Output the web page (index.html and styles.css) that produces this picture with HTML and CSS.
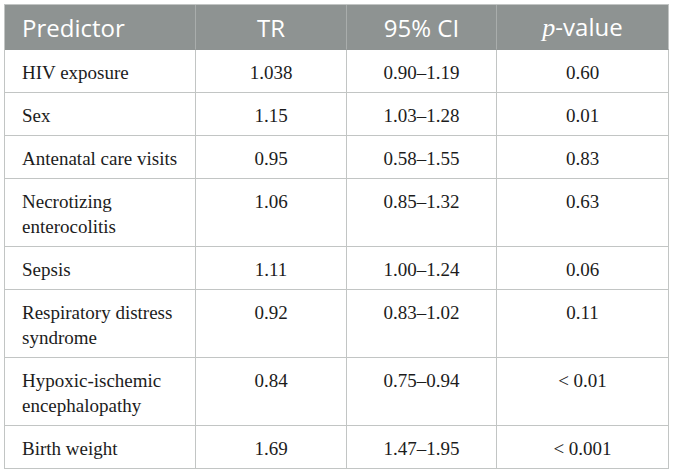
FILE: index.html
```html
<!DOCTYPE html>
<html lang="en">
<head>
<meta charset="utf-8">
<title>Predictors</title>
<link rel="stylesheet" href="styles.css">
</head>
<body>
<table class="results">
  <colgroup>
    <col class="c1">
    <col class="c2">
    <col class="c3">
    <col class="c4">
  </colgroup>
  <thead>
    <tr>
      <th class="left">Predictor</th>
      <th>TR</th>
      <th>95% CI</th>
      <th><span class="pit">p</span>-value</th>
    </tr>
  </thead>
  <tbody>
    <tr><td class="left">HIV exposure</td><td>1.038</td><td>0.90–1.19</td><td>0.60</td></tr>
    <tr><td class="left">Sex</td><td>1.15</td><td>1.03–1.28</td><td>0.01</td></tr>
    <tr><td class="left">Antenatal care visits</td><td>0.95</td><td>0.58–1.55</td><td>0.83</td></tr>
    <tr><td class="left">Necrotizing enterocolitis</td><td>1.06</td><td>0.85–1.32</td><td>0.63</td></tr>
    <tr><td class="left">Sepsis</td><td>1.11</td><td>1.00–1.24</td><td>0.06</td></tr>
    <tr><td class="left">Respiratory distress syndrome</td><td>0.92</td><td>0.83–1.02</td><td>0.11</td></tr>
    <tr><td class="left">Hypoxic-ischemic encephalopathy</td><td>0.84</td><td>0.75–0.94</td><td>&lt; 0.01</td></tr>
    <tr><td class="left">Birth weight</td><td>1.69</td><td>1.47–1.95</td><td>&lt; 0.001</td></tr>
  </tbody>
</table>
</body>
</html>
```
FILE: styles.css
```css
html, body {
  background: #ffffff;
}
body {
  margin: 4px;
}
.results {
  table-layout: fixed;
  width: 664px;
  border-collapse: separate;
  border-spacing: 0;
  border-top: 1px solid #c2c5c4;
  border-left: 1px solid #c2c5c4;
}
.c1 { width: 191px; }
.c2 { width: 151px; }
.c3 { width: 150px; }
.c4 { width: 172px; }

.results th {
  background: #8e9392;
  color: #ffffff;
  font-family: "Open Sans", "Noto Sans", sans-serif;
  font-weight: 400;
  font-size: 24px;
  line-height: 32px;
  padding: 6px 8px 5px;
  text-align: center;
  border-right: 1px solid #a9adac;
  border-bottom: 1px solid #8e9392;
  white-space: nowrap;
}
.results th:last-child {
  border-right-color: #c2c5c4;
}
.results th .pit {
  font-family: "Liberation Serif", "DejaVu Serif", serif;
  font-style: italic;
  font-size: 26px;
}
.results td {
  font-family: "Liberation Serif", "Times New Roman", serif;
  font-size: 19px;
  line-height: 25px;
  color: #1c1c1c;
  padding: 10px 8px 7px;
  text-align: center;
  vertical-align: top;
  border-right: 1px solid #c2c5c4;
  border-bottom: 1px solid #c2c5c4;
}
.results .left {
  text-align: left;
  padding-left: 17px;
  padding-right: 10px;
}
```
